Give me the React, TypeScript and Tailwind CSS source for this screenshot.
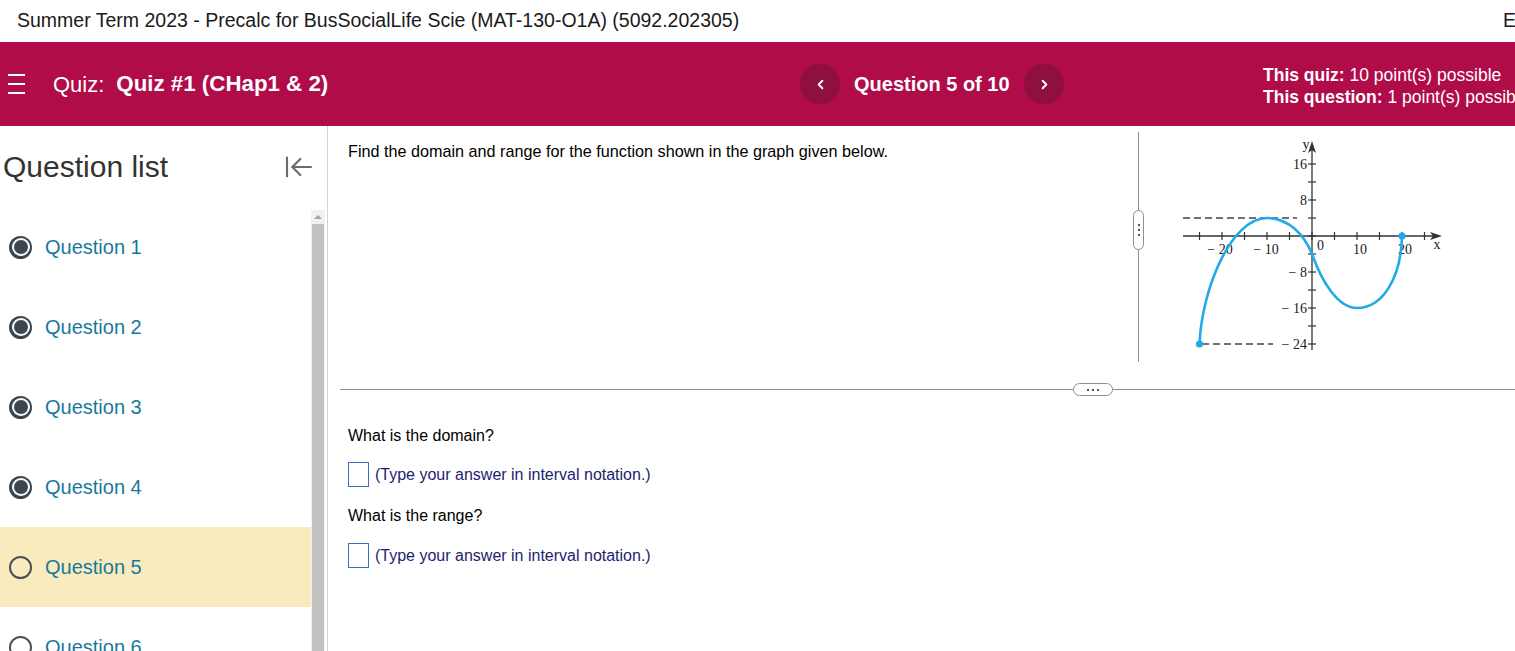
import { ArrowLeftToLine, ChevronLeft, ChevronRight } from "lucide-react";

const questions = [1, 2, 3, 4, 5, 6];

const RadioIcon = ({ done }: { done: boolean }) =>
	done ? (
		<span className="flex h-[23px] w-[23px] items-center justify-center rounded-full bg-[#3d4650]">
			<span className="flex h-[18px] w-[18px] items-center justify-center rounded-full bg-white">
				<span className="h-[14px] w-[14px] rounded-full bg-[#3d4650]" />
			</span>
		</span>
	) : (
		<span className="h-[23px] w-[23px] rounded-full border-[2.5px] border-[#4a5058]" />
	);

const Graph = () => {
	const xTicks = [-25, -20, -15, -10, -5, 0, 5, 10, 15, 20, 25];
	const yTicks = [-24, -20, -16, -12, -8, -4, 0, 4, 8, 12, 16];
	const X = (x: number) => 132 + 4.5 * x;
	const Y = (y: number) => 99 - 4.5 * y;
	return (
		<svg width="265" height="215" viewBox="0 0 265 215" className="block">
			{/* dashed guides */}
			<line x1="3" y1="81" x2="117" y2="81" stroke="#444" strokeWidth="1.3" strokeDasharray="7 4" />
			<line x1="22" y1="207" x2="93" y2="207" stroke="#444" strokeWidth="1.3" strokeDasharray="7 4" />
			{/* axes */}
			<line x1="3" y1="99" x2="254" y2="99" stroke="#333" strokeWidth="1.3" />
			<polygon points="262,99 250,95 253,99 250,103" fill="#333" />
			<line x1="132" y1="213" x2="132" y2="12" stroke="#333" strokeWidth="1.3" />
			<polygon points="132,4 128,16 132,13 136,16" fill="#333" />
			{xTicks.map((t) => (
				<line key={t} x1={X(t)} y1="95" x2={X(t)} y2="103" stroke="#333" strokeWidth="1.2" />
			))}
			{yTicks.map((t) => (
				<line key={t} x1="128" y1={Y(t)} x2="136" y2={Y(t)} stroke="#333" strokeWidth="1.2" />
			))}
			<g fontFamily="'Liberation Serif', 'Times New Roman', serif" fontSize="14" fill="#222">
				<text x="126" y="12" textAnchor="middle">y</text>
				<text x="127" y="32" textAnchor="end">16</text>
				<text x="127" y="68" textAnchor="end">8</text>
				<text x="127" y="140" textAnchor="end">− 8</text>
				<text x="127" y="176" textAnchor="end">− 16</text>
				<text x="127" y="212" textAnchor="end">− 24</text>
				<text x="40" y="117" textAnchor="middle">− 20</text>
				<text x="86" y="117" textAnchor="middle">− 10</text>
				<text x="137" y="113">0</text>
				<text x="180" y="117" textAnchor="middle">10</text>
				<text x="225" y="117" textAnchor="middle">20</text>
				<text x="257" y="112" textAnchor="middle">x</text>
			</g>
			{/* curve */}
			<path
				d="M19.5 207 C 22 150, 52 81, 87 81 C 108 81, 124 97, 132 117 C 142 145, 158 171, 177 171 C 202 171, 221 142, 222 99"
				fill="none"
				stroke="#22aae6"
				strokeWidth="2.6"
			/>
			<circle cx="19.5" cy="207" r="3.6" fill="#22aae6" />
			<circle cx="222" cy="99" r="3.6" fill="#22aae6" />
		</svg>
	);
};

const AnswerRow = () => (
	<div className="flex h-[25px] items-center">
		<span className="h-[25px] w-[21px] border border-[#3b6fc4] bg-white" />
		<span className="ml-[6px] text-[16px] text-[#1e1e6e]">
			(Type your answer in interval notation.)
		</span>
	</div>
);

export default function App() {
	return (
		<div
			className="flex h-[651px] w-[1515px] flex-col overflow-hidden bg-white"
			style={{ fontFamily: "Arial, 'Liberation Sans', Helvetica, sans-serif" }}
		>
			{/* course title */}
			<div className="flex h-[42px] shrink-0 items-center text-[19.5px] text-[#1a1a1a]">
				<div className="flex-1 whitespace-nowrap pl-[17px]">
					Summer Term 2023 - Precalc for BusSocialLife Scie (MAT-130-O1A) (5092.202305)
				</div>
				<div className="w-[12px] shrink-0 overflow-hidden whitespace-nowrap">Exit</div>
			</div>

			{/* quiz header */}
			<div className="flex h-[84px] shrink-0 items-center overflow-hidden bg-[#b00c4a] text-white">
				<div className="flex w-[800px] shrink-0 items-center">
					<div className="ml-[8px] flex w-[17px] flex-col gap-[7px]">
						<span className="h-[2px] bg-white" />
						<span className="h-[2px] bg-white" />
						<span className="h-[2px] bg-white" />
					</div>
					<span className="ml-[28px] text-[22px]">Quiz:</span>
					<span className="ml-[12px] text-[22.3px] font-bold">Quiz #1 (CHap1 &amp; 2)</span>
				</div>
				<div className="flex w-[264px] shrink-0 items-center">
					<button className="flex h-[40px] w-[40px] items-center justify-center rounded-full bg-[#8f0f40]">
						<ChevronLeft size={15} strokeWidth={3} />
					</button>
					<span className="ml-[14px] whitespace-nowrap text-[20px] font-bold">Question 5 of 10</span>
					<button className="ml-auto flex h-[40px] w-[40px] items-center justify-center rounded-full bg-[#8f0f40]">
						<ChevronRight size={15} strokeWidth={3} />
					</button>
				</div>
				<div className="ml-[199px] shrink-0 whitespace-nowrap pt-[4px] text-[17.5px] leading-[22px]">
					<div>
						<span className="font-bold">This quiz:</span> 10 point(s) possible
					</div>
					<div>
						<span className="font-bold">This question:</span> 1 point(s) possible
					</div>
				</div>
			</div>

			<div className="flex min-h-0 flex-1">
				{/* sidebar */}
				<aside className="flex w-[328px] shrink-0 flex-col border-r border-[#d3d3d3]">
					<div className="flex h-[81px] shrink-0 items-center justify-between pl-[3px] pr-[12px]">
						<h2 className="text-[30px] text-[#333]">Question list</h2>
						<ArrowLeftToLine size={32} strokeWidth={1.6} className="text-[#6b6b6b]" />
					</div>
					<div className="flex min-h-0 flex-1">
						<ul className="w-[311px]">
							{questions.map((q) => (
								<li
									key={q}
									className={`flex h-[80px] items-center pl-[9px] ${q === 5 ? "bg-[#f9ebbd]" : ""}`}
								>
									<RadioIcon done={q < 5} />
									<span className="ml-[13px] text-[20px] text-[#16799d]">Question {q}</span>
								</li>
							))}
						</ul>
						<div className="mt-[3px] flex w-[14px] flex-col bg-[#f1f1f1]">
							<div className="flex h-[14px] items-center justify-center">
								<span className="h-0 w-0 border-x-[4px] border-b-[4px] border-x-transparent border-b-[#a3a3a3]" />
							</div>
							<div className="mx-[1px] flex-1 bg-[#c1c1c1]" />
						</div>
					</div>
				</aside>

				{/* main */}
				<main className="flex min-w-0 flex-1 flex-col text-black">
					<div className="flex h-[263px] shrink-0">
						<div className="w-[810px] pl-[20px] pt-[15px] text-[16.2px] leading-[20px]">
							Find the domain and range for the function shown in the graph given below.
						</div>
						<div className="relative mt-[6px] h-[230px] w-px bg-[#8a8f9a]">
							<div className="absolute left-[-5px] top-[78px] flex h-[40px] w-[11px] flex-col items-center justify-center gap-[3px] rounded-full border border-[#8a8f9a] bg-white">
								<span className="h-[2px] w-[2px] bg-[#555]" />
								<span className="h-[2px] w-[2px] bg-[#555]" />
								<span className="h-[2px] w-[2px] bg-[#555]" />
							</div>
						</div>
						<div className="ml-[41px] mt-[11px]">
							<Graph />
						</div>
					</div>
					<div className="relative ml-[12px] h-px shrink-0 bg-[#8a8f9a]">
						<div className="absolute left-[733px] top-[-6px] flex h-[13px] w-[40px] items-center justify-center gap-[3px] rounded-full border border-[#8a8f9a] bg-white">
							<span className="h-[2px] w-[2px] bg-[#555]" />
							<span className="h-[2px] w-[2px] bg-[#555]" />
							<span className="h-[2px] w-[2px] bg-[#555]" />
						</div>
					</div>
					<div className="pl-[20px] pt-[36px] text-[16px] leading-[20px]">
						<div>What is the domain?</div>
						<div className="mt-[16px]">
							<AnswerRow />
						</div>
						<div className="mt-[19px]">What is the range?</div>
						<div className="mt-[17px]">
							<AnswerRow />
						</div>
					</div>
				</main>
			</div>
		</div>
	);
}
